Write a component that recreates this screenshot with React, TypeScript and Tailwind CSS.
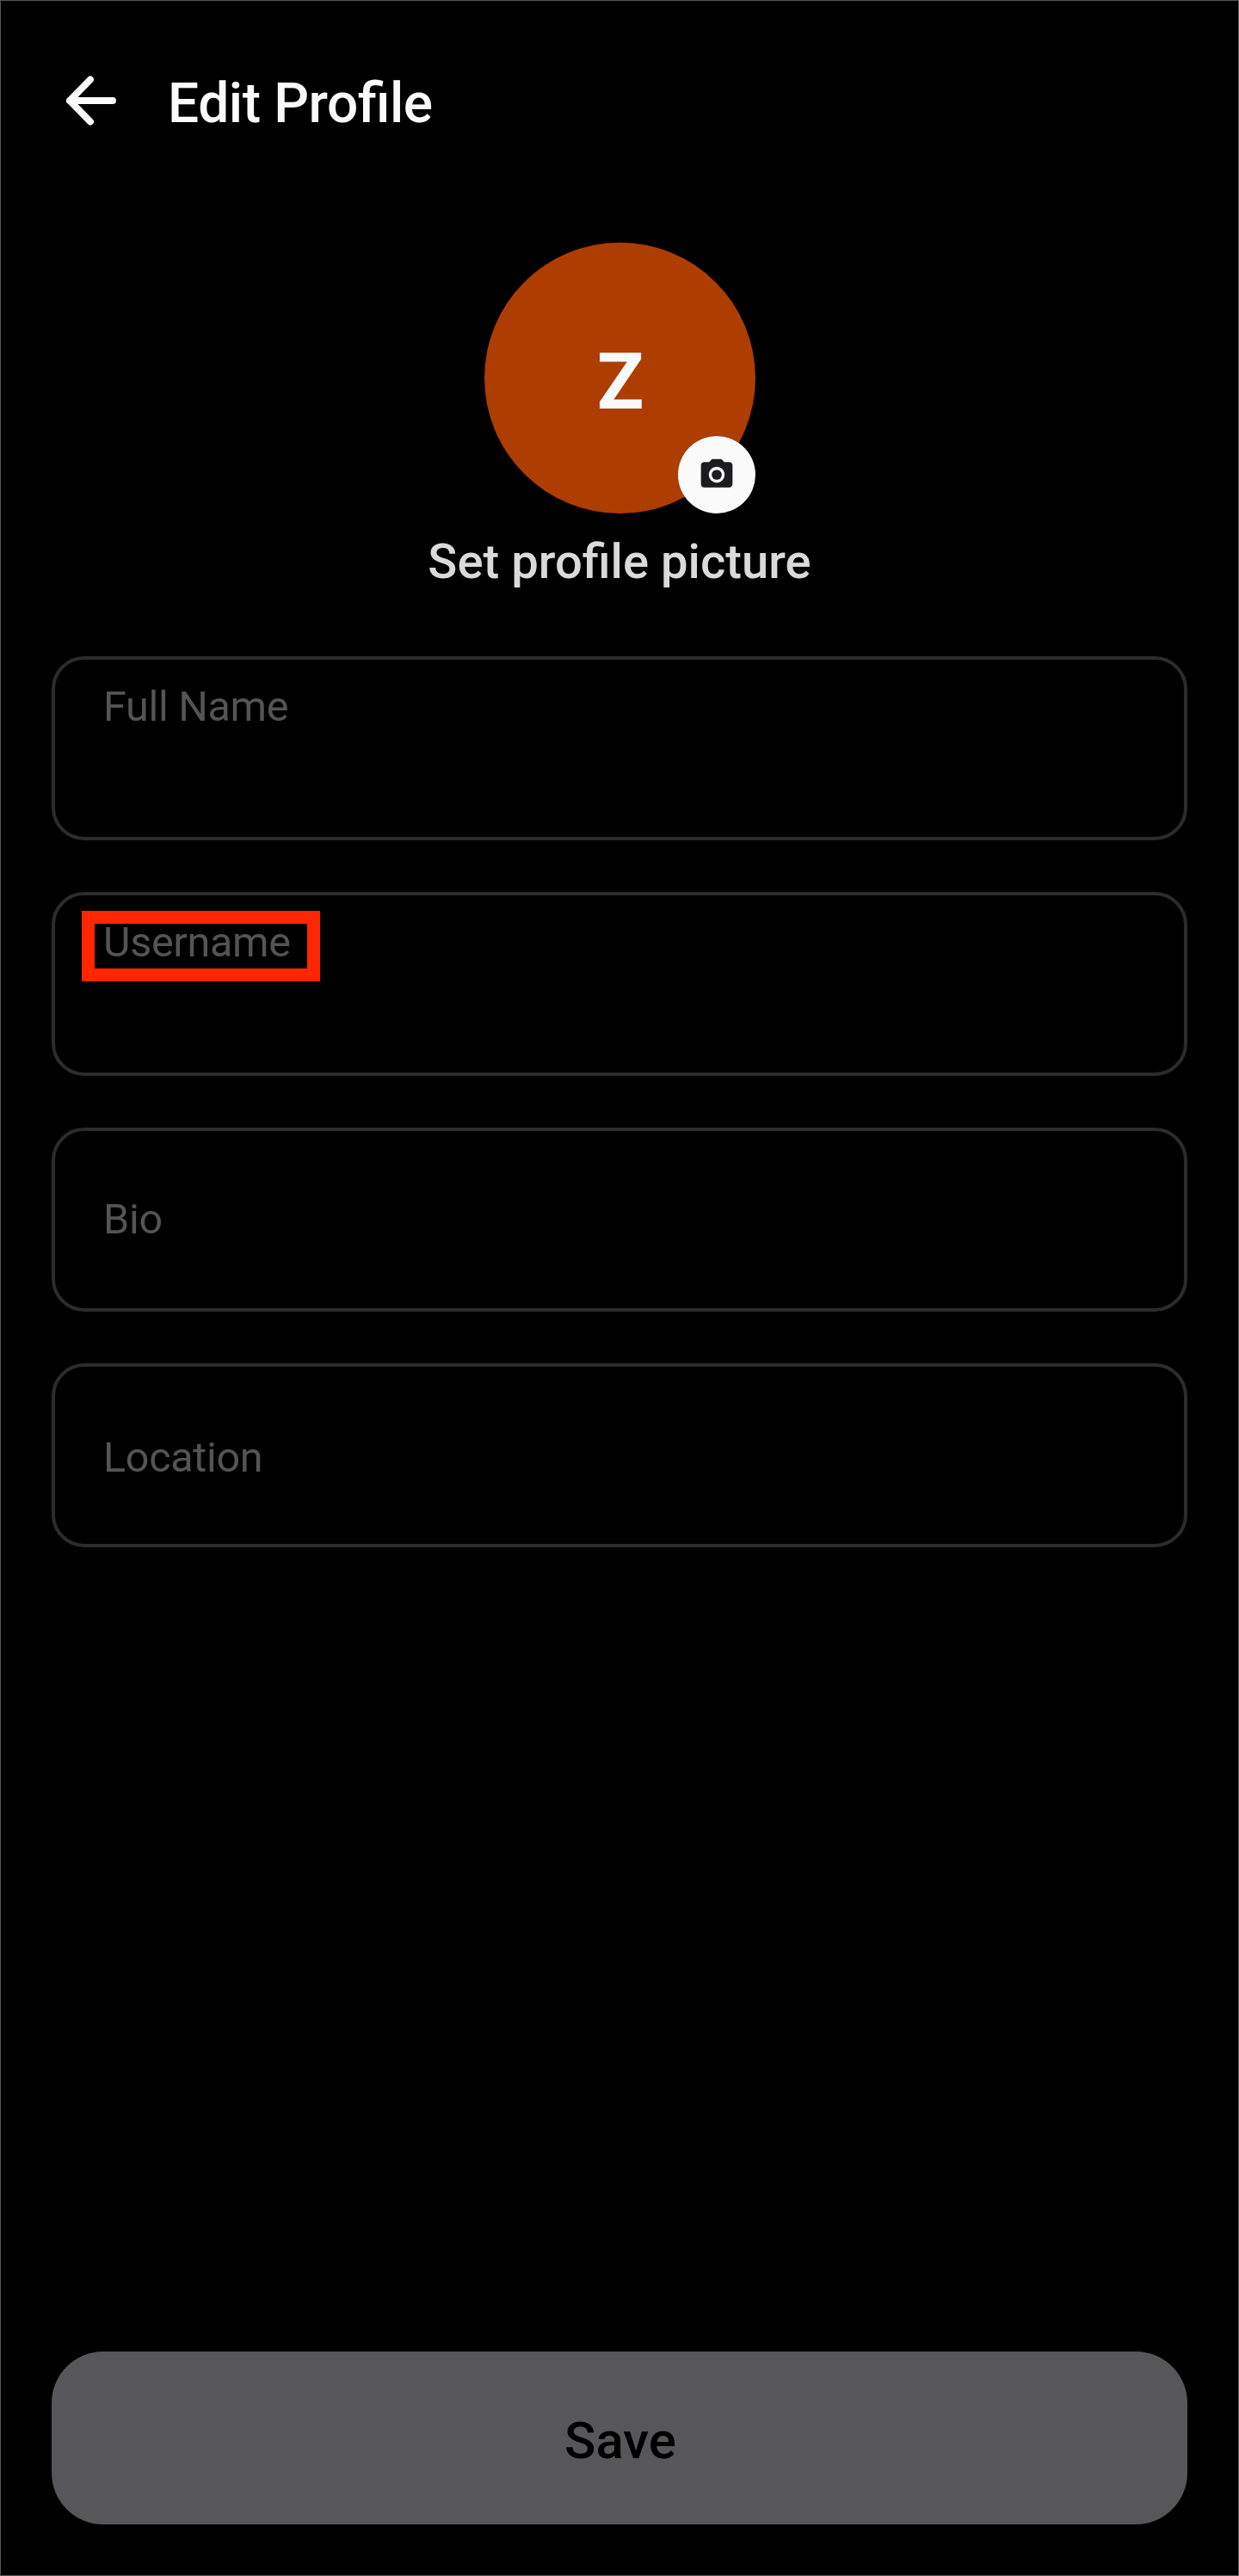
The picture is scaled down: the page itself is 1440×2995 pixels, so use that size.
import React from "react";
import { MdPhotoCamera } from "react-icons/md";

type FieldProps = {
  label: string;
  labelClass: string;
  children?: React.ReactNode;
};

function Field({ label, labelClass, children }: FieldProps) {
  return (
    <div className="relative h-[214px] rounded-[38px] border-4 border-[#2c2c2d] px-[56px]">
      <label className={`block text-[48.5px] leading-[48px] tracking-[-0.3px] text-[#545454] ${labelClass}`}>{label}</label>
      {children}
    </div>
  );
}

export default function App() {
  return (
    <div className="flex h-[2995px] w-[1440px] flex-col border border-[#555555] bg-black px-[59px] font-[Roboto,sans-serif]">
      <header className="flex h-[281px] items-start pt-[87px] text-[#fafafa]">
        <button aria-label="Back" className="ml-[16px] h-[58px] w-[59px]">
          <svg viewBox="0 0 59 58" className="h-full w-full" fill="none" stroke="currentColor" strokeWidth="8" strokeLinecap="round" strokeLinejoin="round">
            <path d="M29 4.5 5 29l24 24.500M5 29h50" />
          </svg>
        </button>
        <h1 className="ml-[60px] text-[64px] leading-[65px] font-medium tracking-[-0.4px] [font-feature-settings:'liga'_1]">Edit Profile</h1>
      </header>

      <section className="flex flex-col items-center">
        <div className="relative flex size-[315px] items-center justify-center rounded-full bg-[#ad3d00]">
          <span className="pt-[10px] pl-[2px] text-[90px] leading-[90px] font-bold text-[#fafafa]">Z</span>
          <button aria-label="Change picture" className="absolute right-0 bottom-0 flex size-[90px] items-center justify-center rounded-full bg-[#fafafa]">
            <MdPhotoCamera className="size-[44px] text-[#1c1c1e]" />
          </button>
        </div>
        <p className="mt-[28px] text-[56.2px] leading-[56px] font-medium text-[#dadada]">Set profile picture</p>
      </section>

      <form className="mt-[82px] flex flex-col gap-[60px]">
        <Field label="Full Name" labelClass="mt-[31px]" />
        <Field label="Username" labelClass="mt-[31px]">
          <div className="absolute top-[18px] left-[31px] h-[82px] w-[277px] border-[15px] border-[#ff2600]" />
        </Field>
        <Field label="Bio" labelClass="mt-[79px]" />
        <Field label="Location" labelClass="mt-[82px]" />
      </form>

      <button className="mt-auto mb-[59px] h-[201px] shrink-0 rounded-[60px] bg-[#575759] pt-[6px] pl-[2px] text-[60px] leading-[60px] font-medium text-black">
        Save
      </button>
    </div>
  );
}
